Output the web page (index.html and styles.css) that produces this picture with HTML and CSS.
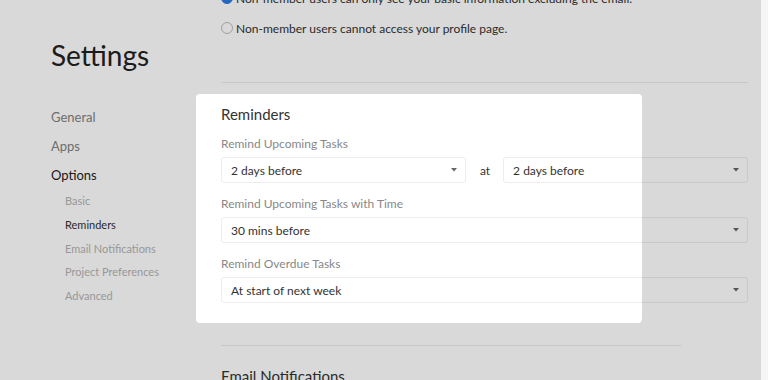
FILE: index.html
```html
<!DOCTYPE html>
<html lang="en">
<head>
    <meta charset="UTF-8">
    <meta name="viewport" content="width=device-width, initial-scale=1.0">
    <title>Settings</title>
    <link rel="stylesheet" href="styles.css">
</head>
<body>
    <div class="page">
        <!-- Sidebar -->
        <div class="sidebar">
            <h1>Settings</h1>
            <ul class="nav">
                <li>General</li>
                <li>Apps</li>
                <li class="active">Options</li>
            </ul>
            <ul class="subnav">
                <li>Basic</li>
                <li class="active">Reminders</li>
                <li>Email Notifications</li>
                <li>Project Preferences</li>
                <li>Advanced</li>
            </ul>
        </div>

        <!-- Main -->
        <div class="main">
            <div class="radios">
                <div class="radio-row">
                    <span class="radio checked"></span>
                    Non-member users can only see your basic information excluding the email.
                </div>
                <div class="radio-row">
                    <span class="radio"></span>
                    Non-member users cannot access your profile page.
                </div>
            </div>

            <div class="section reminders">
                <h2>Reminders</h2>

                <div class="label">Remind Upcoming Tasks</div>
                <div class="field-row">
                    <div class="select">
                        <span>2 days before</span>
                        <svg class="caret" width="6" height="4" viewBox="0 0 6 4"><path d="M0 0h6L3 3.5z"/></svg>
                    </div>
                    <span class="at">at</span>
                    <div class="select">
                        <span>2 days before</span>
                        <svg class="caret" width="6" height="4" viewBox="0 0 6 4"><path d="M0 0h6L3 3.5z"/></svg>
                    </div>
                </div>

                <div class="label">Remind Upcoming Tasks with Time</div>
                <div class="select">
                    <span>30 mins before</span>
                    <svg class="caret" width="6" height="4" viewBox="0 0 6 4"><path d="M0 0h6L3 3.5z"/></svg>
                </div>

                <div class="label">Remind Overdue Tasks</div>
                <div class="select">
                    <span>At start of next week</span>
                    <svg class="caret" width="6" height="4" viewBox="0 0 6 4"><path d="M0 0h6L3 3.5z"/></svg>
                </div>
            </div>

            <div class="section email">
                <h2>Email Notifications</h2>
            </div>
        </div>

        <!-- Tour spotlight over the reminders block -->
        <div class="spotlight"></div>
    </div>
</body>
</html>
```

FILE: styles.css
```css
body {
    margin: 0;
    padding: 0;
    font-family: Lato, 'Open Sans', sans-serif;
    background: #f5f5f5;
    color: #333;
    overflow: hidden;
}

.page {
    position: relative;
    width: 761px;
    height: 380px;
    overflow: hidden;
    background: #fff;
    display: flex;
}

/* sidebar */

.sidebar {
    width: 170px;
    padding-left: 51px;
    flex-shrink: 0;
}

.sidebar h1 {
    margin: 38px 0 0;
    font-size: 28px;
    line-height: 34px;
    font-weight: 400;
    color: #222;
}

.nav, .subnav {
    list-style: none;
    margin: 0;
    padding: 0;
}

.nav {
    margin-top: 31px;
}

.nav li {
    font-size: 13px;
    line-height: 29px;
    color: #828282;
}

.nav li.active {
    color: #222;
}

.subnav {
    padding-left: 14px;
    margin-top: -1px;
}

.subnav li {
    font-size: 11px;
    line-height: 23.75px;
    color: #b3b3b3;
}

.subnav li.active {
    color: #333;
}

/* main */

.main {
    width: 527px;
}

.radios {
    margin-top: -17px;
}

.radio-row {
    display: flex;
    align-items: center;
    height: 30px;
    font-size: 12px;
    color: #333;
}

.radio {
    width: 10px;
    height: 10px;
    border: 1px solid #bbb;
    border-radius: 50%;
    margin-right: 3px;
    box-sizing: content-box;
}

.radio.checked {
    background: #2a7ae2;
    border-color: #2a7ae2;
}

.section {
    border-top: 1px solid #ececec;
}

.reminders {
    margin-top: 39px;
    padding: 21px 0 42px;
}

.section h2 {
    margin: 0;
    font-size: 15px;
    line-height: 20px;
    font-weight: 400;
    color: #333;
}

.label {
    font-size: 12px;
    line-height: 15px;
    color: #888;
    margin: 13px 0 6px;
}

.reminders h2 + .label {
    margin-top: 12px;
}

.field-row {
    display: flex;
    align-items: center;
}

.at {
    font-size: 12px;
    color: #333;
    padding: 0 13px 0 14px;
}

.select {
    flex: 1;
    height: 26px;
    box-sizing: border-box;
    border: 1px solid #ededed;
    border-radius: 3px;
    background: #fff;
    display: flex;
    align-items: center;
    justify-content: space-between;
    padding: 0 8px 0 9px;
    font-size: 12px;
    color: #333;
}

.caret {
    fill: #666;
}

.email {
    width: 460px;
    padding-top: 20px;
}

/* spotlight */

.spotlight {
    position: absolute;
    left: 196px;
    top: 94px;
    width: 446px;
    height: 229px;
    border-radius: 4px;
    box-shadow: 0 0 0 2000px rgba(0, 0, 0, 0.15);
    pointer-events: none;
}
```
